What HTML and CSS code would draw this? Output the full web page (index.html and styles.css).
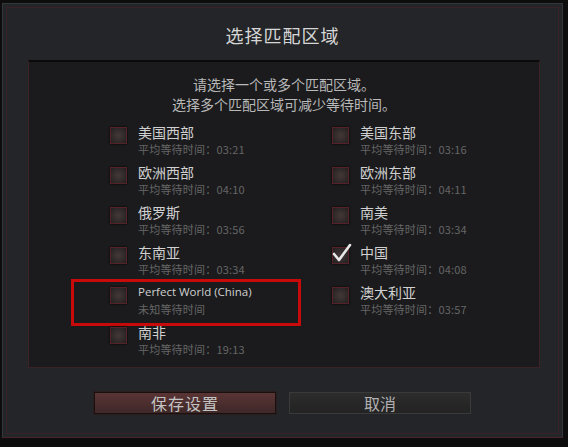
FILE: index.html
```html
<!DOCTYPE html>
<html lang="zh-CN">
<head>
  <meta charset="UTF-8" />
  <title>选择匹配区域</title>
  <link rel="stylesheet" href="styles.css">
</head>
<body>
  <div class="dialog">
    <h2 class="title">选择匹配区域</h2>

    <div class="panel">
      <p class="intro">请选择一个或多个匹配区域。<br/>选择多个匹配区域可减少等待时间。</p>

      <ul class="regions">
        <li class="region">
          <span class="box"></span>
          <div class="info"><div class="name">美国西部</div><div class="wait">平均等待时间：03:21</div></div>
        </li>
        <li class="region">
          <span class="box"></span>
          <div class="info"><div class="name">美国东部</div><div class="wait">平均等待时间：03:16</div></div>
        </li>
        <li class="region">
          <span class="box"></span>
          <div class="info"><div class="name">欧洲西部</div><div class="wait">平均等待时间：04:10</div></div>
        </li>
        <li class="region">
          <span class="box"></span>
          <div class="info"><div class="name">欧洲东部</div><div class="wait">平均等待时间：04:11</div></div>
        </li>
        <li class="region">
          <span class="box"></span>
          <div class="info"><div class="name">俄罗斯</div><div class="wait">平均等待时间：03:56</div></div>
        </li>
        <li class="region">
          <span class="box"></span>
          <div class="info"><div class="name">南美</div><div class="wait">平均等待时间：03:34</div></div>
        </li>
        <li class="region">
          <span class="box"></span>
          <div class="info"><div class="name">东南亚</div><div class="wait">平均等待时间：03:34</div></div>
        </li>
        <li class="region">
          <span class="box checked">
            <svg class="tick" width="22" height="22" viewBox="0 0 22 22"><path d="M3 12 L8 18 L19 3" fill="none" stroke="#e8e8e8" stroke-width="2.6" stroke-linecap="round" stroke-linejoin="round"/></svg>
          </span>
          <div class="info"><div class="name">中国</div><div class="wait">平均等待时间：04:08</div></div>
        </li>
        <li class="region marked">
          <span class="box"></span>
          <div class="info"><div class="name latin">Perfect World (China)</div><div class="wait">未知等待时间</div></div>
        </li>
        <li class="region">
          <span class="box"></span>
          <div class="info"><div class="name">澳大利亚</div><div class="wait">平均等待时间：03:57</div></div>
        </li>
        <li class="region">
          <span class="box"></span>
          <div class="info"><div class="name">南非</div><div class="wait">平均等待时间：19:13</div></div>
        </li>
      </ul>
    </div>

    <div class="actions">
      <button class="btn save">保存设置</button>
      <button class="btn cancel">取消</button>
    </div>
  </div>
</body>
</html>
```

FILE: styles.css
```css
* {
  margin: 0;
  padding: 0;
  box-sizing: border-box;
}

body {
  background: #0d0d0e;
  font-family: "Noto Sans CJK SC", "Noto Sans", sans-serif;
  color: #cfcfcf;
  padding: 3px 0 0 2px;
}

.dialog {
  width: 561px;
  height: 435px;
  background: #232528;
  border: 1px solid #34373a;
  border-bottom-color: #4a2328;
  box-shadow: inset 0 0 0 3px #232528, inset 0 0 0 4px #3a2328;
}

.title {
  text-align: center;
  font-size: 18px;
  font-weight: normal;
  letter-spacing: 1px;
  line-height: 49px;
  padding-top: 7px;
  color: #d6d6d6;
}

.panel {
  margin: 0 22px 0 25px;
  height: 308px;
  background: #1b1b1d;
  border: 1px solid #3a2226;
  border-top: 2px solid #0a0a0a;
}

.intro {
  text-align: center;
  font-size: 14px;
  line-height: 20px;
  padding-top: 12px;
  color: #b9b9b9;
}

.regions {
  list-style: none;
  display: grid;
  grid-template-columns: 222px 180px;
  row-gap: 6px;
  padding: 9px 0 0 81px;
}

.region {
  display: flex;
  gap: 11px;
  position: relative;
}

.box {
  width: 17px;
  height: 17px;
  margin-top: 4px;
  flex: none;
  border: 1px solid #56222a;
  background: radial-gradient(circle at 50% 50%, #433838 0%, #2e2727 70%, #211d1e 100%);
  box-shadow: 0 0 2px #000;
  position: relative;
}

.tick {
  position: absolute;
  left: -2px;
  top: -6px;
}

.name {
  font-size: 14px;
  line-height: 18px;
  color: #d0d0d0;
}

.name.latin {
  font-family: "Open Sans", "Noto Sans", sans-serif;
  font-size: 11.5px;
}

.wait {
  font-size: 11px;
  line-height: 16px;
  letter-spacing: 0.2px;
  color: #656565;
}

.marked::after {
  content: "";
  position: absolute;
  left: -39px;
  top: -4px;
  width: 224px;
  height: 41px;
  border: 3px solid #c80a0a;
}

.actions {
  display: flex;
  justify-content: center;
  gap: 13px;
  margin-top: 24px;
}

.btn {
  width: 182px;
  height: 22px;
  font-family: inherit;
  font-size: 16px;
  line-height: 20px;
  color: #c4c4c4;
  cursor: pointer;
}

.save {
  background: linear-gradient(#5a3435, #3e2828);
  border: 1px solid #1a1010;
  box-shadow: 0 0 0 1px #2a1d1d;
  letter-spacing: 1px;
}

.cancel {
  background: linear-gradient(#2c2c2d, #232324);
  border: 1px solid #3a3a3b;
  color: #b0b0b0;
}
```
